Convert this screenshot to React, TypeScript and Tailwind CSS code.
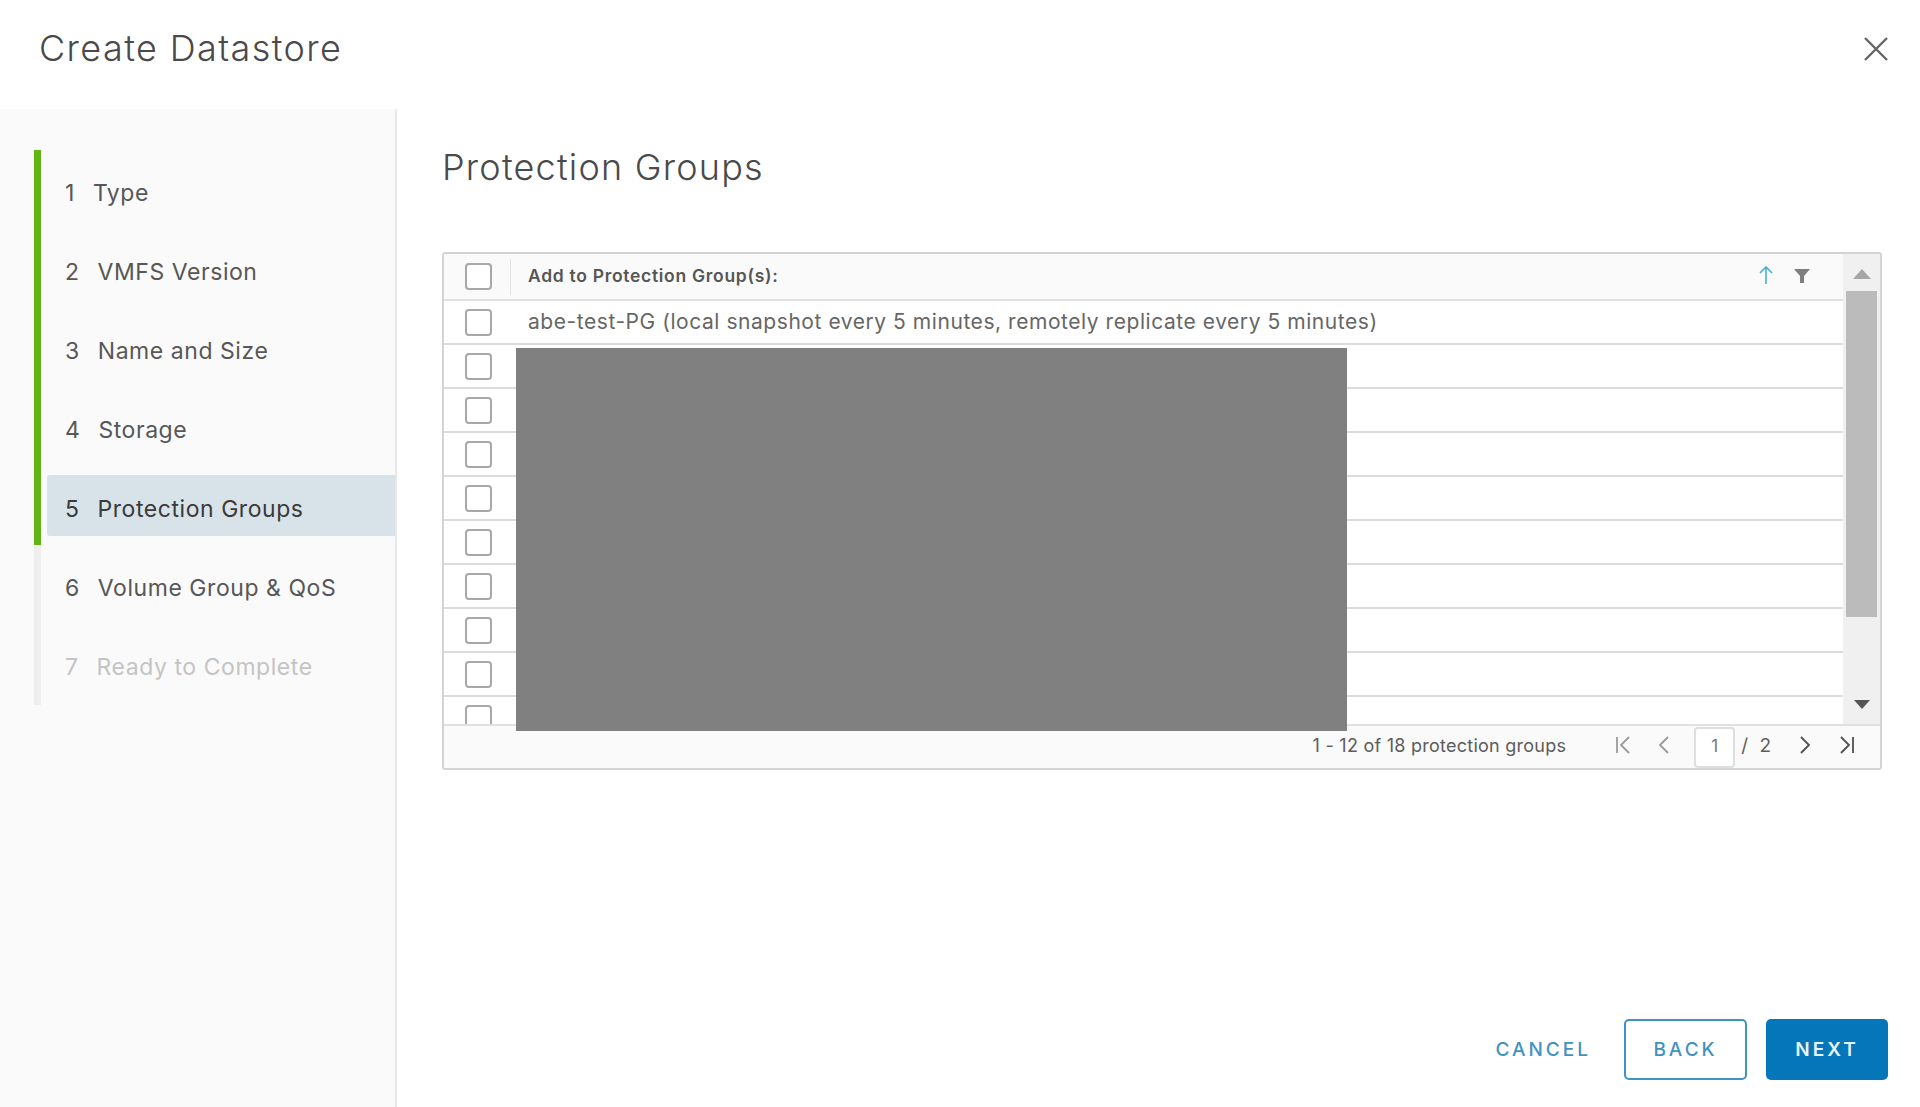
import React from "react";

const steps = [
  { n: 1, label: "Type", text: "text-[#575757]", bar: "border-[#60b515]" },
  { n: 2, label: "VMFS Version", text: "text-[#575757]", bar: "border-[#60b515]" },
  { n: 3, label: "Name and Size", text: "text-[#575757]", bar: "border-[#60b515]" },
  { n: 4, label: "Storage", text: "text-[#575757]", bar: "border-[#60b515]" },
  { n: 5, label: "Protection Groups", text: "text-[#3a3a3a]", bar: "border-[#60b515]", active: true },
  { n: 6, label: "Volume Group & QoS", text: "text-[#575757]", bar: "border-[#eeeeee]" },
  { n: 7, label: "Ready to Complete", text: "text-[#c4c4c4]", bar: "border-[#eeeeee]" },
];

function Box() {
  return <div className="w-[27px] h-[27px] rounded-[4px] border-2 border-[#a8a8a8] bg-white shrink-0" />;
}

function Row() {
  return (
    <div className="h-[44px] shrink-0 border-b-2 border-[#dcdcdc] flex items-center pl-[21px]">
      <Box />
    </div>
  );
}

export default function App() {
  return (
    <div className="w-[1920px] h-[1107px] bg-white flex flex-col overflow-hidden font-['Inter','Liberation_Sans',sans-serif]">
      <header className="h-[109px] shrink-0 flex items-start justify-between pl-[39px] pr-[31px]">
        <h1 className="mt-[26px] text-[36px] leading-[44px] font-light tracking-[1.4px] text-[#4a4a4a]">Create Datastore</h1>
        <svg className="mt-[36px]" width="26" height="26" viewBox="0 0 26 26" fill="none" stroke="#666666" strokeWidth="2.4">
          <path d="M2 2 L24 24 M24 2 L2 24" />
        </svg>
      </header>
      <div className="flex-1 flex min-h-0">
        <aside className="w-[397px] shrink-0 bg-[#fafafa] border-r-2 border-[#e8e8e8] pt-[41px] pl-[34px]">
          {steps.map((s) => (
            <div key={s.n} className={`${s.n === 7 ? "h-[81px]" : "h-[79px]"} py-[9px] pl-[6px] border-l-[7px] ${s.bar}`}>
              <div className={`h-[61px] flex items-center pl-[18px] pt-[8px] rounded-l-[3px] text-[23px] tracking-[0.55px] ${s.text} ${s.active ? "bg-[#d8e3e9]" : ""}`}>
                <span>{s.n}</span>
                <span className="ml-[18px]">{s.label}</span>
              </div>
            </div>
          ))}
        </aside>
        <main className="flex-1 min-w-0 flex flex-col pl-[45px] pr-[32px]">
          <h2 className="mt-[35px] text-[36px] leading-[46px] font-light tracking-[1.2px] text-[#4a4a4a]">Protection Groups</h2>
          <div className="relative mt-[62px] w-[1440px] h-[518px] border-2 border-[#d4d4d4] rounded-[3px] flex flex-col overflow-hidden">
            <div className="flex-1 min-h-0 flex">
              <div className="flex-1 min-w-0 flex flex-col overflow-hidden">
                <div className="h-[47px] shrink-0 bg-[#fafafa] border-b-2 border-[#e0e0e0] flex items-center pl-[21px] pr-[32px]">
                  <Box />
                  <div className="ml-[18px] w-px h-[36px] bg-[#e4e4e4]" />
                  <span className="ml-[17px] text-[17.5px] font-semibold tracking-[0.7px] text-[#565656]">Add to Protection Group(s):</span>
                  <svg className="ml-auto mb-[4px] mr-[-1px]" width="16" height="20" viewBox="0 0 16 20" fill="none" stroke="#49afd9" strokeWidth="1.6">
                    <path d="M8 19 V2 M2 8 L8 2 L14 8" />
                  </svg>
                  <svg className="ml-[20px] mb-[1px]" width="18" height="18" viewBox="0 0 18 18" fill="#7f7f7f">
                    <path d="M1 2 H17 L11 9 V16 H7 V9 Z" />
                  </svg>
                </div>
                <div className="h-[44px] shrink-0 border-b-2 border-[#dcdcdc] flex items-center pl-[21px]">
                  <Box />
                  <span className="ml-[36px] text-[21px] tracking-[0.55px] text-[#666666]">abe-test-PG (local snapshot every 5 minutes, remotely replicate every 5 minutes)</span>
                </div>
                <Row />
                <Row />
                <Row />
                <Row />
                <Row />
                <Row />
                <Row />
                <Row />
                <div className="shrink-0 h-[44px] flex items-start pl-[21px] pt-[8px]"><Box /></div>
              </div>
              <div className="w-[37px] shrink-0 bg-[#f0f0f0] flex flex-col items-center">
                <div className="h-[37px] shrink-0 flex items-center justify-center pt-[2px]">
                  <svg width="18" height="10" viewBox="0 0 18 10" fill="#a6a6a6"><path d="M9 0 L18 10 H0 Z" /></svg>
                </div>
                <div className="w-[31px] h-[326px] bg-[#bbbbbb]" />
                <div className="flex-1 flex items-end pb-[15px]">
                  <svg width="16" height="9" viewBox="0 0 16 9" fill="#555555"><path d="M0 0 H16 L8 9 Z" /></svg>
                </div>
              </div>
            </div>
            <div className="h-[44px] shrink-0 bg-[#fafafa] border-t-2 border-[#e0e0e0] flex items-center justify-end pr-[25px] text-[18px] text-[#5c5c5c]">
              <span className="tracking-[0.25px] pb-[4px]">1 - 12 of 18 protection groups</span>
              <svg className="ml-[49px] mb-[4px]" width="16" height="18" viewBox="0 0 16 18" fill="none" stroke="#9a9a9a" strokeWidth="1.8"><path d="M2 1 V17 M14 1 L6 9 L14 17" /></svg>
              <svg className="ml-[27px] mb-[4px]" width="12" height="18" viewBox="0 0 12 18" fill="none" stroke="#9a9a9a" strokeWidth="1.8"><path d="M10 1 L2 9 L10 17" /></svg>
              <div className="ml-[24px] w-[41px] h-[41px] bg-white border-2 border-[#dedede] rounded-[4px] flex items-center justify-center text-[17px] text-[#777777]">1</div>
              <span className="ml-[6px] text-[19px] tracking-[1px] [word-spacing:4px] pb-[2px]">/ 2</span>
              <svg className="ml-[27px] mb-[4px]" width="12" height="18" viewBox="0 0 12 18" fill="none" stroke="#4f4f4f" strokeWidth="1.8"><path d="M2 1 L10 9 L2 17" /></svg>
              <svg className="ml-[28px] mb-[4px]" width="16" height="18" viewBox="0 0 16 18" fill="none" stroke="#4f4f4f" strokeWidth="1.8"><path d="M14 1 V17 M2 1 L10 9 L2 17" /></svg>
            </div>
            <div className="absolute left-[72px] top-[94px] w-[831px] h-[383px] bg-[#808080]" />
          </div>
          <div className="flex-1 flex items-end justify-end pb-[27px]">
            <button className="text-[19px] font-medium tracking-[3px] text-[#3f93c2] mr-[33px] h-[61px] pt-[2px]">CANCEL</button>
            <button className="w-[123px] h-[61px] rounded-[5px] border-2 border-[#3f93c2] text-[19px] font-medium tracking-[3px] text-[#3f93c2] pt-[1px]">BACK</button>
            <button className="ml-[19px] w-[122px] h-[61px] rounded-[5px] bg-[#0576b9] text-[19px] font-semibold tracking-[3px] text-[#e8f3f9] pt-[1px]">NEXT</button>
          </div>
        </main>
      </div>
    </div>
  );
}
